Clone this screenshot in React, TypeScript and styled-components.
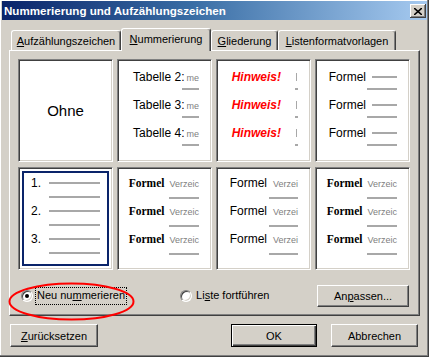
import React from 'react'
import styled, { createGlobalStyle } from 'styled-components'

const GlobalStyle = createGlobalStyle`
  html, body {
    margin: 0;
    padding: 0;
    background: #d4d0c8;
  }
  * {
    box-sizing: border-box;
  }
`

const Window = styled.div`
  width: 429px;
  height: 357px;
  background: #d4d0c8;
  font-family: 'Liberation Sans', Arial, sans-serif;
  font-size: 11px;
  color: #000;
  padding: 1px 2px 0 2px;
  box-shadow: inset -1px -1px #404040, inset -2px -2px #808080, inset 1px 1px #fff;
`

const TitleBar = styled.div`
  height: 19px;
  display: flex;
  align-items: center;
  padding-left: 2px;
  background: linear-gradient(to right, #0a246a 0%, #3a6ea5 45%, #a6caf0 100%);
  color: #fff;
  font-weight: bold;
  font-size: 11.6px;
`

const Title = styled.span`
  flex: 1;
`

const CloseButton = styled.div`
  width: 16px;
  height: 14px;
  margin-right: 1px;
  margin-top: 1px;
  background: #d4d0c8;
  display: flex;
  align-items: center;
  justify-content: center;
  box-shadow: inset -1px -1px #404040, inset 1px 1px #fff, inset -2px -2px #808080;
`

const Body = styled.div`
  padding: 8px 7px 0 7px;
`

const TabRow = styled.div`
  display: flex;
  align-items: flex-end;
  height: 22px;
  padding-left: 2px;
  position: relative;
  z-index: 1;
`

const Tab = styled.div<{ $active?: boolean; $w: number }>`
  width: ${({ $w }) => $w}px;
  height: ${({ $active }) => ($active ? 23 : 20)}px;
  margin-bottom: ${({ $active }) => ($active ? -1 : 0)}px;
  display: flex;
  align-items: center;
  justify-content: center;
  padding-bottom: ${({ $active }) => ($active ? 3 : 0)}px;
  background: #d4d0c8;
  border-top: 1px solid #fff;
  border-left: 1px solid #fff;
  border-right: 1px solid #404040;
  border-radius: 3px 3px 0 0;
  box-shadow: inset -1px 0 #808080;
`

const Panel = styled.div`
  border: 1px solid;
  border-color: #fff #404040 #404040 #fff;
  box-shadow: inset -1px -1px #808080;
  padding: 8px;
`

const Grid = styled.div`
  display: grid;
  grid-template-columns: repeat(4, 95px);
  grid-auto-rows: 103px;
  column-gap: 4px;
  row-gap: 5px;
`

const Cell = styled.div<{ $selected?: boolean; $center?: boolean; $top: number }>`
  background: #fff;
  border: 1px solid;
  border-color: #808080 #fff #fff #808080;
  box-shadow: inset 1px 1px #404040, inset -1px -1px #d4d0c8
    ${({ $selected }) => ($selected ? ', inset 0 0 0 3px #fff, inset 0 0 0 5px #0a246a' : '')};
  display: flex;
  flex-direction: column;
  align-items: ${({ $center }) => ($center ? 'center' : 'flex-end')};
  justify-content: ${({ $center }) => ($center ? 'center' : 'flex-start')};
  padding: ${({ $center, $top }) => ($center ? '0' : `${$top}px 12px 0 0`)};
  font-family: Arial, 'Liberation Sans', sans-serif;
`

const Entry = styled.div`
  height: 28px;
  display: flex;
  flex-direction: column;
  align-items: flex-end;
`

const Line = styled.div<{ $align?: 'baseline' | 'center' }>`
  height: 14px;
  line-height: 14px;
  display: flex;
  align-items: ${({ $align }) => $align || 'center'};
  white-space: nowrap;
`

const Big = styled.span`
  font-size: 12px;
`

const BigLarge = styled.span`
  font-size: 15px;
`

const SerifText = styled.span`
  font-family: 'Liberation Serif', 'Times New Roman', serif;
  font-size: 11.5px;
  font-weight: bold;
`

const Hint = styled.span`
  font-size: 12px;
  font-weight: bold;
  font-style: italic;
  color: #ff0000;
`

const Small = styled.span<{ $gap: number }>`
  font-size: 9px;
  color: #808080;
  margin-left: ${({ $gap }) => $gap}px;
`

const Dash = styled.span<{ $w: number; $gap: number }>`
  display: inline-block;
  width: ${({ $w }) => $w}px;
  height: 2px;
  margin-left: ${({ $gap }) => $gap}px;
  background: #a8a8a8;
`

const Tick = styled.span`
  display: inline-block;
  width: 1px;
  height: 8px;
  margin-left: 15px;
  margin-right: 1px;
  background: #a8a8a8;
`

const Rule = styled.div<{ $w: number; $m: number }>`
  width: ${({ $w }) => $w}px;
  height: 2px;
  margin-top: ${({ $m }) => $m}px;
  background: #a8a8a8;
`

const OptionsRow = styled.div`
  position: relative;
  display: flex;
  align-items: center;
  height: 22px;
  margin-top: 15px;
`

const Option = styled.label<{ $gap?: number }>`
  display: flex;
  align-items: center;
  margin-left: ${({ $gap }) => $gap || 0}px;
`

const Radio = styled.span<{ $checked?: boolean }>`
  position: relative;
  width: 12px;
  height: 12px;
  border-radius: 50%;
  background: #fff;
  border: 1px solid;
  border-color: #808080 #fff #fff #808080;
  box-shadow: inset 1px 1px #404040, inset -1px -1px #d4d0c8;

  &::after {
    content: '';
    display: ${({ $checked }) => ($checked ? 'block' : 'none')};
    position: absolute;
    left: 3px;
    top: 3px;
    width: 4px;
    height: 4px;
    border-radius: 50%;
    background: #000;
  }
`

const OptionText = styled.span<{ $focus?: boolean }>`
  margin-left: 2px;
  padding: 1px 1px 2px 1px;
  line-height: 13px;
  border: 1px dotted ${({ $focus }) => ($focus ? '#000' : 'transparent')};
`

const Highlight = styled.svg`
  position: absolute;
  left: -10px;
  top: -3px;
  pointer-events: none;
`

const Button = styled.button<{ $w: number; $h?: number; $default?: boolean }>`
  width: ${({ $w }) => $w}px;
  height: ${({ $h }) => $h || 23}px;
  font-family: 'Liberation Sans', Arial, sans-serif;
  font-size: 11px;
  color: #000;
  background: #d4d0c8;
  padding: 0;
  border: 1px solid;
  border-color: ${({ $default }) => ($default ? '#000' : '#fff #404040 #404040 #fff')};
  box-shadow: ${({ $default }) =>
    $default
      ? 'inset 1px 1px #fff, inset -1px -1px #404040, inset -2px -2px #808080'
      : 'inset -1px -1px #808080'};
`

const PushRight = styled.div`
  margin-left: auto;
  margin-right: 2px;
`

const Footer = styled.div`
  display: flex;
  align-items: center;
  margin-top: 8px;
  padding: 0 2px 0 1px;
`

const FooterRight = styled.div`
  margin-left: auto;
  display: flex;
  gap: 14px;
`

const nums = [2, 3, 4]

export default function App() {
  return (
    <>
      <GlobalStyle />
      <Window>
        <TitleBar>
          <Title>Nummerierung und Aufzählungszeichen</Title>
          <CloseButton>
            <svg width="8" height="7" viewBox="0 0 8 7">
              <path d="M0 0 L8 7 M8 0 L0 7" stroke="#000" strokeWidth="1.6" />
            </svg>
          </CloseButton>
        </TitleBar>
        <Body>
          <TabRow>
            <Tab $w={110}>
              <span><u>A</u>ufzählungszeichen</span>
            </Tab>
            <Tab $w={90} $active>
              <span><u>N</u>ummerierung</span>
            </Tab>
            <Tab $w={67}>
              <span><u>G</u>liederung</span>
            </Tab>
            <Tab $w={118}>
              <span><u>L</u>istenformatvorlagen</span>
            </Tab>
          </TabRow>
          <Panel>
            <Grid>
              <Cell $center $top={0}>
                <BigLarge>Ohne</BigLarge>
              </Cell>
              <Cell $top={10}>
                {nums.map((n) => (
                  <Entry key={n}>
                    <Line $align="baseline">
                      <Big>Tabelle {n}:</Big>
                      <Small $gap={2}>me</Small>
                    </Line>
                    <Rule $w={17} $m={4} />
                  </Entry>
                ))}
              </Cell>
              <Cell $top={10}>
                {nums.map((n) => (
                  <Entry key={n}>
                    <Line>
                      <Hint>Hinweis!</Hint>
                      <Tick />
                    </Line>
                    <Rule $w={3} $m={4} />
                  </Entry>
                ))}
              </Cell>
              <Cell $top={10}>
                {nums.map((n) => (
                  <Entry key={n}>
                    <Line>
                      <Big>Formel</Big>
                      <Dash $w={25} $gap={6} />
                    </Line>
                    <Rule $w={30} $m={4} />
                  </Entry>
                ))}
              </Cell>

              <Cell $selected $top={8}>
                {[1, 2, 3].map((n) => (
                  <Entry key={n}>
                    <Line>
                      <Big>{n}.</Big>
                      <Dash $w={51} $gap={8} />
                    </Line>
                    <Rule $w={51} $m={6} />
                  </Entry>
                ))}
              </Cell>
              <Cell $top={8}>
                {nums.map((n) => (
                  <Entry key={n}>
                    <Line $align="baseline">
                      <SerifText>Formel</SerifText>
                      <Small $gap={5}>Verzeic</Small>
                    </Line>
                    <Rule $w={30} $m={7} />
                  </Entry>
                ))}
              </Cell>
              <Cell $top={8}>
                {nums.map((n) => (
                  <Entry key={n}>
                    <Line $align="baseline">
                      <Big>Formel</Big>
                      <Small $gap={6}>Verzei</Small>
                    </Line>
                    <Rule $w={29} $m={7} />
                  </Entry>
                ))}
              </Cell>
              <Cell $top={8}>
                {nums.map((n) => (
                  <Entry key={n}>
                    <Line $align="baseline">
                      <SerifText>Formel</SerifText>
                      <Small $gap={5}>Verzeic</Small>
                    </Line>
                    <Rule $w={30} $m={7} />
                  </Entry>
                ))}
              </Cell>
            </Grid>

            <OptionsRow>
              <Highlight width="127" height="39" viewBox="0 0 127 39">
                <ellipse cx="63.5" cy="19.5" rx="62" ry="18" fill="none" stroke="#ff0000" strokeWidth="2" />
              </Highlight>
              <Option $gap={3}>
                <Radio $checked />
                <OptionText $focus>
                  Neu nu<u>m</u>merieren
                </OptionText>
              </Option>
              <Option $gap={53}>
                <Radio />
                <OptionText>
                  Li<u>s</u>te fortführen
                </OptionText>
              </Option>
              <PushRight>
                <Button $w={92} $h={22}>
                  An<u>p</u>assen...
                </Button>
              </PushRight>
            </OptionsRow>
          </Panel>
          <Footer>
            <Button $w={88}>
              <u>Z</u>urücksetzen
            </Button>
            <FooterRight>
              <Button $w={86} $default>
                OK
              </Button>
              <Button $w={87}>Abbrechen</Button>
            </FooterRight>
          </Footer>
        </Body>
      </Window>
    </>
  )
}
